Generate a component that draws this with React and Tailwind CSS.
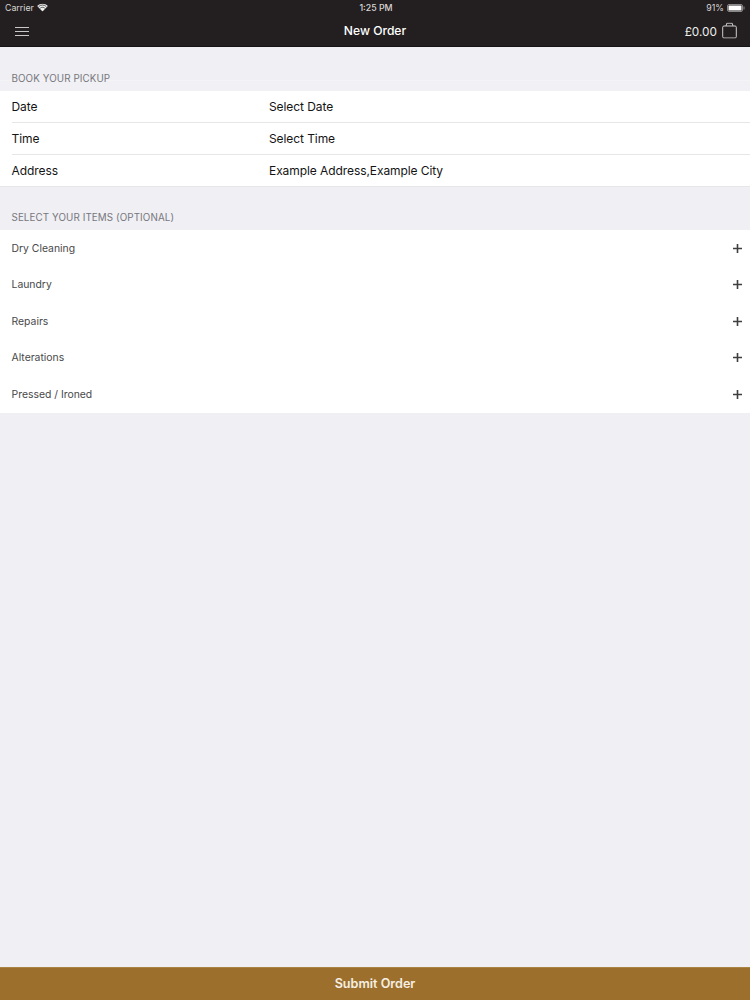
import React from "react";

const font = { fontFamily: 'Inter, "Liberation Sans", sans-serif' };

function Wifi() {
  return (
    <svg width="11" height="8" viewBox="0 0 12 9" className="ml-[3px] -translate-y-[0.5px]">
      <path d="M6 9 L0 2.8 C3.4 -0.6 8.6 -0.6 12 2.8 Z" fill="#eeeeee" />
      <path d="M1.7 3.4 C4.2 1.2 7.8 1.2 10.3 3.4 M3.4 5.2 C4.9 4 7.1 4 8.6 5.2" stroke="#231f20" strokeWidth="0.8" fill="none" />
    </svg>
  );
}

function Battery() {
  return (
    <svg width="18" height="8" viewBox="0 0 18 8" className="ml-[3px]">
      <rect x="0.5" y="0.5" width="15" height="7" rx="1.5" fill="none" stroke="#8a8788" />
      <rect x="1.5" y="1.5" width="13" height="5" rx="0.5" fill="#fff" />
      <rect x="16.5" y="2.5" width="1" height="3" fill="#8a8788" />
    </svg>
  );
}

function Bag() {
  return (
    <svg width="15" height="16" viewBox="0 0 15 16" className="ml-[5px] -translate-y-[0.5px]" fill="none" stroke="#cfcdcd" strokeWidth="1">
      <rect x="0.7" y="3.5" width="13.6" height="12" rx="1.2" />
      <path d="M4 3.5 L4.8 0.7 H10.2 L11 3.5" />
    </svg>
  );
}

function Plus() {
  return (
    <svg width="9" height="9" viewBox="0 0 9 9">
      <path d="M4.5 0 V9 M0 4.5 H9" stroke="#3f3f42" strokeWidth="1.6" />
    </svg>
  );
}

function BookRow({ label, value, border }) {
  return (
    <div className={`h-[32px] flex items-center ml-[11.5px] ${border ? "border-b border-[#e6e6e8]" : ""}`}>
      <span className="w-[257.5px] text-[12px] tracking-[-0.08px] text-[#141414]">{label}</span>
      <span className="text-[12px] tracking-[-0.08px] text-[#141414]">{value}</span>
    </div>
  );
}

function ItemRow({ label }) {
  return (
    <div className="h-[36.5px] flex items-center justify-between pl-[11.5px] pr-[8px]">
      <span className="text-[10.4px] pt-[1px] text-[#48484a]">{label}</span>
      <Plus />
    </div>
  );
}

export default function App() {
  return (
    <div className="w-[750px] h-[1000px] flex flex-col bg-[#efeff4] overflow-hidden" style={font}>
      <header className="h-[47px] shrink-0 bg-[#231f20] border-b border-[#171415] flex flex-col">
        <div className="h-[15px] flex items-center justify-between pl-[5px] pr-[5px] text-[8.8px] text-[#d8d6d6] relative">
          <div className="flex items-center">
            <span>Carrier</span>
            <Wifi />
          </div>
          <span className="absolute left-[2px] right-0 text-center font-medium">1:25 PM</span>
          <div className="flex items-center">
            <span>91%</span>
            <Battery />
          </div>
        </div>
        <div className="flex-1 flex items-center justify-between pl-[15px] pr-[13px] pt-[1px] relative">
          <div className="flex flex-col gap-[3px] w-[14px]">
            <div className="h-[1px] bg-[#c9c7c7]" />
            <div className="h-[1px] bg-[#c9c7c7]" />
            <div className="h-[1px] bg-[#c9c7c7]" />
          </div>
          <span className="absolute left-0 right-0 top-[7px] text-center text-[12.1px] leading-[18px] font-medium text-white">New Order</span>
          <div className="flex items-center">
            <span className="text-[11.8px] pt-[3px] text-[#eeeeee]">£0.00</span>
            <Bag />
          </div>
        </div>
      </header>

      <div className="h-[33px] shrink-0" />
      <div className="h-[11px] shrink-0 border-t border-[#f4f4f7] bg-[#f1f1f5] relative">
        <span className="absolute left-[11.5px] top-[-10px] text-[9.8px] leading-[16px] text-[#77777c] tracking-[0.1px]">BOOK YOUR PICKUP</span>
      </div>
      <section className="bg-white border-b border-[#e6e6e8] h-[96px] shrink-0">
        <BookRow label="Date" value="Select Date" border />
        <BookRow label="Time" value="Select Time" border />
        <BookRow label="Address" value="Example Address,Example City" />
      </section>

      <div className="h-[43px] shrink-0 flex items-end pl-[11.5px] pb-[4px]">
        <span className="text-[9.8px] leading-[16px] text-[#77777c] tracking-[0.1px]">SELECT YOUR ITEMS (OPTIONAL)</span>
      </div>
      <section className="bg-white h-[183px] shrink-0 flex flex-col">
        <ItemRow label="Dry Cleaning" />
        <ItemRow label="Laundry" />
        <ItemRow label="Repairs" />
        <ItemRow label="Alterations" />
        <ItemRow label="Pressed / Ironed" />
      </section>

      <div className="flex-1" />
      <footer className="h-[33px] shrink-0 bg-[#9c6f2d] border-t border-[#a98443] flex items-center justify-center">
        <span className="text-[12.6px] font-semibold text-[#f6efe2]">Submit Order</span>
      </footer>
    </div>
  );
}
